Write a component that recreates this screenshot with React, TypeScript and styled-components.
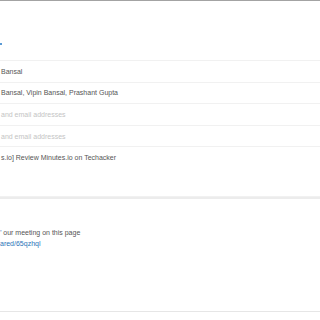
import styled, { createGlobalStyle } from 'styled-components';

const GlobalStyle = createGlobalStyle`
  html, body {
    margin: 0;
    padding: 0;
    background: #fff;
  }
  body {
    font-family: "Liberation Sans", Arial, sans-serif;
    font-size: 7px;
    color: #555;
    overflow: hidden;
  }
`;

const Page = styled.div`
  width: 320px;
  height: 320px;
  border-top: 1px solid #a3a3a3;
  box-sizing: border-box;
  overflow: hidden;
  display: flex;
  flex-direction: column;
`;

const Header = styled.div`
  height: 59px;
  display: flex;
  align-items: flex-end;
  padding-bottom: 15px;
  box-sizing: border-box;
`;

const Caret = styled.span`
  display: block;
  width: 2px;
  height: 2px;
  background: #5b9bd5;
`;

const Fields = styled.div`
  display: flex;
  flex-direction: column;
`;

const Row = styled.div`
  height: 21.6px;
  box-sizing: border-box;
  border-top: 1px solid #f1f1f1;
  display: flex;
  align-items: center;
  white-space: nowrap;
  padding-left: 1px;
`;

const Value = styled.span<{ $placeholder?: boolean }>`
  color: ${(p) => (p.$placeholder ? '#c4c4c4' : '#555')};
`;

const Divider = styled.div`
  margin-top: 28px;
  border-top: 1px solid #f1f1f1;
  border-bottom: 2px solid #ececec;
`;

const Body = styled.div`
  height: 113px;
  padding-top: 28px;
  box-sizing: border-box;
  line-height: 11px;
  border-bottom: 1px solid #e6e6e6;
  white-space: nowrap;
`;

const Line = styled.div``;

const Link = styled.span`
  color: #2a73b8;
`;

export default function App() {
  return (
    <>
      <GlobalStyle />
      <Page>
        <Header>
          <Caret />
        </Header>
        <Fields>
          <Row>
            <Value>Bansal</Value>
          </Row>
          <Row>
            <Value>Bansal, Vipin Bansal, Prashant Gupta</Value>
          </Row>
          <Row>
            <Value $placeholder>and email addresses</Value>
          </Row>
          <Row>
            <Value $placeholder>and email addresses</Value>
          </Row>
          <Row>
            <Value>s.io] Review Minutes.io on Techacker</Value>
          </Row>
        </Fields>
        <Divider />
        <Body>
          <Line>
            <Link>’</Link> our meeting on this page
          </Line>
          <Line>
            <Link>ared/65qzhql</Link>
          </Line>
        </Body>
      </Page>
    </>
  );
}
